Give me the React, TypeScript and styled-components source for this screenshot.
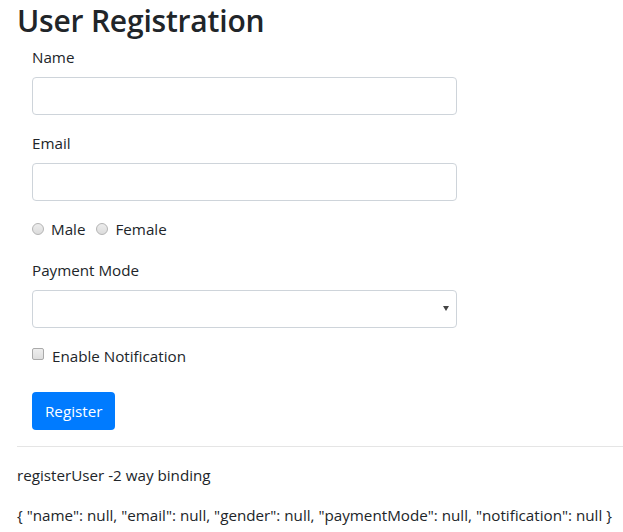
import { createGlobalStyle } from 'styled-components';
import styled from 'styled-components';

const GlobalStyle = createGlobalStyle`
    body{
        margin: 0;
        font-family: "Open Sans", "Noto Sans", sans-serif;
        color: #212529;
        background: #fff;
    }
`

const Page = styled.div`
    padding-left: 17px;
    overflow: hidden;
`

const Title = styled.h2`
    margin: 0 0 4px 0;
    font-size: 30px;
    font-weight: 600;
    line-height: 41px;
    letter-spacing: -0.2px;
`

const Form = styled.form`
    width: 425px;
    padding-left: 15px;
`

const Group = styled.div<{ $gap?: number }>`
    margin-bottom: ${p => p.$gap ?? 16}px;
`

const Label = styled.label`
    display: block;
    font-size: 15.2px;
    line-height: 24px;
    margin-bottom: 8px;
`

const TextInput = styled.input`
    display: block;
    box-sizing: border-box;
    width: 100%;
    height: 38px;
    border: 1px solid #ced4da;
    border-radius: 4px;
    background: #fff;
    font: inherit;
`

const SelectWrap = styled.div`
    position: relative;
`

const Select = styled.select`
    display: block;
    box-sizing: border-box;
    width: 100%;
    height: 38px;
    border: 1px solid #ced4da;
    border-radius: 4px;
    background: #fff;
    appearance: none;
    font: inherit;
`

const Caret = styled.span`
    position: absolute;
    right: 8px;
    top: 16px;
    width: 0;
    height: 0;
    border-left: 3px solid transparent;
    border-right: 3px solid transparent;
    border-top: 5px solid #444;
    pointer-events: none;
`

const ChoiceRow = styled.div`
    display: flex;
    align-items: center;
    height: 24px;
    gap: 11px;
`

const Choice = styled.label`
    display: flex;
    align-items: center;
    gap: 7px;
    font-size: 15.2px;
    line-height: 24px;
`

const Radio = styled.input`
    appearance: none;
    margin: 0;
    width: 12px;
    height: 12px;
    border-radius: 50%;
    border: 1px solid #b4b4b4;
    background: linear-gradient(#ededed, #dcdcdc);
    box-sizing: border-box;
`

const Check = styled.input`
    appearance: none;
    margin: 0 0 4px 0;
    width: 12px;
    height: 12px;
    border-radius: 2px;
    border: 1px solid #aaaaaa;
    background: linear-gradient(#eeeeee, #dedede);
    box-sizing: border-box;
`

const CheckRow = styled.div`
    display: flex;
    align-items: center;
    gap: 8px;
    height: 24px;
    font-size: 15.2px;
    margin-bottom: 24px;
`

const Button = styled.button`
    height: 38px;
    padding: 0 13px;
    border: none;
    border-radius: 4px;
    background: #007bff;
    color: #fff;
    font-family: inherit;
    font-size: 15.2px;
    margin-bottom: 16px;
`

const Rule = styled.hr`
    margin: 0 0 16px 0;
    border: none;
    border-top: 1px solid rgba(0, 0, 0, 0.1);
`

const Text = styled.p`
    margin: 0 0 16px 0;
    font-size: 15.2px;
    line-height: 24px;
`

const user = { name: null, email: null, gender: null, paymentMode: null, notification: null }

export default function App() {
    const json = '{ ' + Object.entries(user).map(([k, v]) => `"${k}": ${JSON.stringify(v)}`).join(', ') + ' }'
    return (
        <Page>
            <GlobalStyle />
            <Title>User Registration</Title>
            <Form onSubmit={(e) => e.preventDefault()}>
                <Group>
                    <Label>Name</Label>
                    <TextInput type="text" />
                </Group>
                <Group>
                    <Label>Email</Label>
                    <TextInput type="email" />
                </Group>
                <Group $gap={17}>
                    <ChoiceRow>
                        <Choice><Radio type="radio" name="gender" />Male</Choice>
                        <Choice><Radio type="radio" name="gender" />Female</Choice>
                    </ChoiceRow>
                </Group>
                <Group>
                    <Label>Payment Mode</Label>
                    <SelectWrap>
                        <Select defaultValue="">
                            <option value=""></option>
                        </Select>
                        <Caret />
                    </SelectWrap>
                </Group>
                <CheckRow>
                    <Check type="checkbox" />
                    Enable Notification
                </CheckRow>
                <Button type="submit">Register</Button>
            </Form>
            <Rule />
            <Text>registerUser -2 way binding</Text>
            <Text>{json}</Text>
        </Page>
    )
}
